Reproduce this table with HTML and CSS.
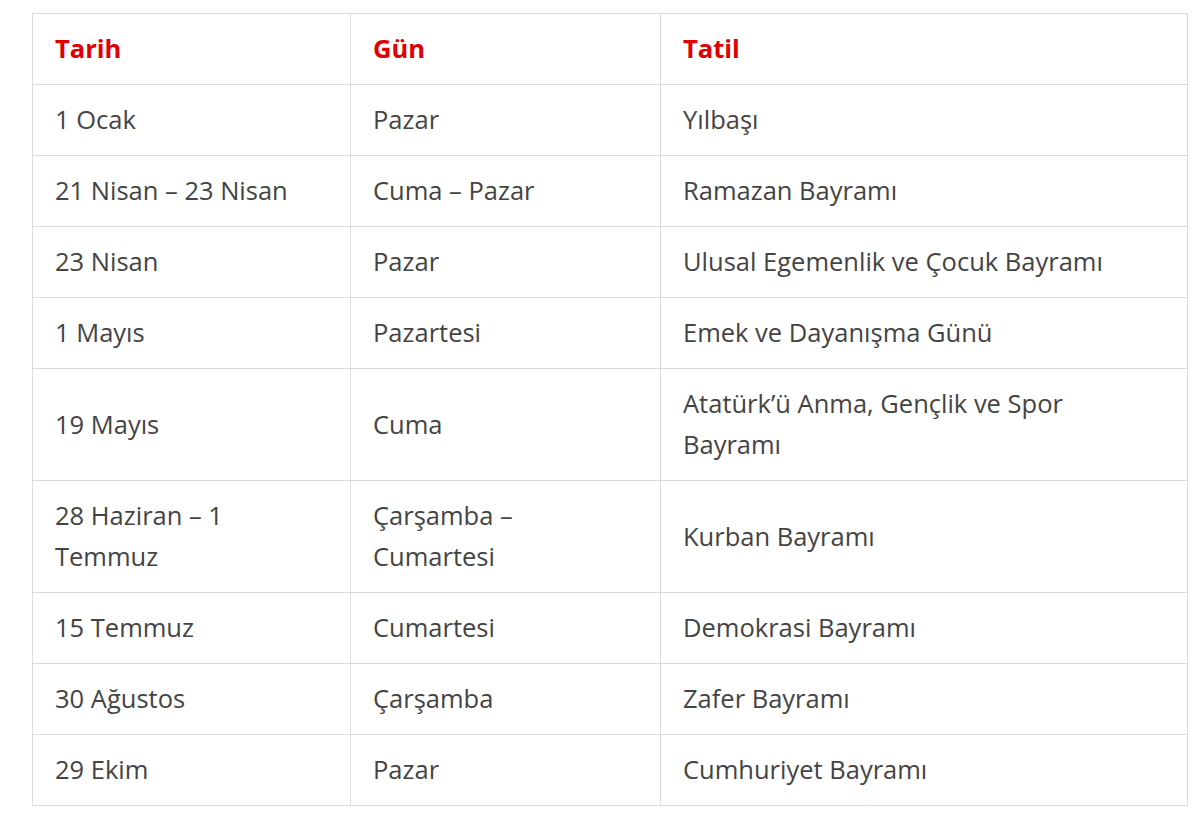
FILE: index.html
```html
<!DOCTYPE html>
<html lang="tr">
<head>
<meta charset="utf-8">
<link rel="stylesheet" href="styles.css">
</head>
<body>
<table class="holidays">
  <colgroup>
    <col class="c1">
    <col class="c2">
    <col class="c3">
  </colgroup>
  <thead>
    <tr><th>Tarih</th><th>Gün</th><th>Tatil</th></tr>
  </thead>
  <tbody>
    <tr><td>1 Ocak</td><td>Pazar</td><td>Yılbaşı</td></tr>
    <tr><td>21 Nisan – 23 Nisan</td><td>Cuma – Pazar</td><td>Ramazan Bayramı</td></tr>
    <tr><td>23 Nisan</td><td>Pazar</td><td>Ulusal Egemenlik ve Çocuk Bayramı</td></tr>
    <tr><td>1 Mayıs</td><td>Pazartesi</td><td>Emek ve Dayanışma Günü</td></tr>
    <tr><td>19 Mayıs</td><td>Cuma</td><td>Atatürk’ü Anma, Gençlik ve Spor Bayramı</td></tr>
    <tr><td>28 Haziran – 1 Temmuz</td><td>Çarşamba – Cumartesi</td><td>Kurban Bayramı</td></tr>
    <tr><td>15 Temmuz</td><td>Cumartesi</td><td>Demokrasi Bayramı</td></tr>
    <tr><td>30 Ağustos</td><td>Çarşamba</td><td>Zafer Bayramı</td></tr>
    <tr><td>29 Ekim</td><td>Pazar</td><td>Cumhuriyet Bayramı</td></tr>
  </tbody>
</table>
</body>
</html>
```
FILE: styles.css
```css
html, body {
  margin: 0;
  padding: 0;
  background: #ffffff;
}
body {
  padding: 13px 0 0 32px;
  font-family: "Open Sans", "Noto Sans", sans-serif;
}
.holidays {
  width: 1155px;
  border-collapse: collapse;
  table-layout: fixed;
  font-size: 25.5px;
  color: #444444;
}
.c1 { width: 318px; }
.c2 { width: 310px; }
.c3 { width: 527px; }
.holidays th,
.holidays td {
  border: 1px solid #dcdcdc;
  padding: 14px 22px 15px;
  line-height: 41px;
  text-align: left;
  vertical-align: middle;
}
.holidays th {
  color: #e00000;
  font-weight: 700;
}
```
